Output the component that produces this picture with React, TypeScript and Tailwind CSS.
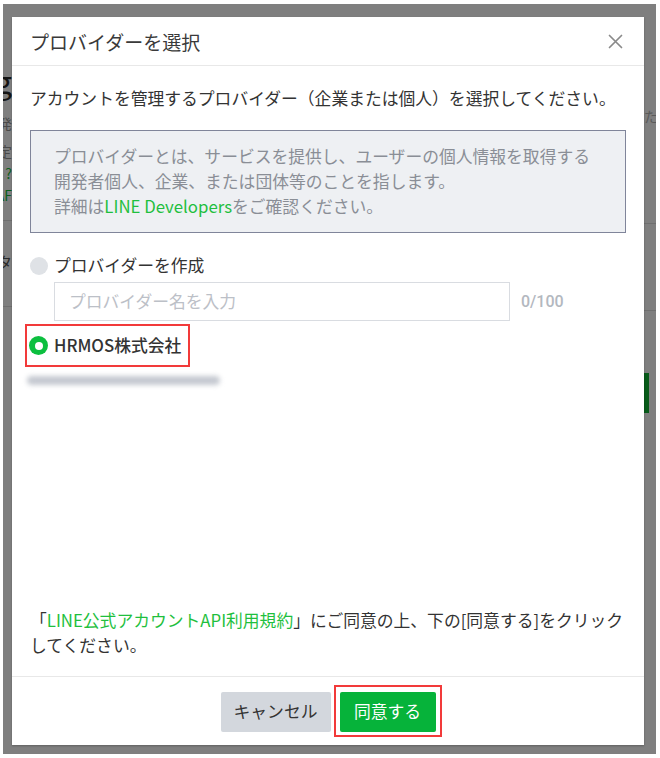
import React from "react";

const font = { fontFamily: '"Noto Sans CJK JP", Roboto, sans-serif' };

function CloseIcon() {
  return (
    <svg width="15" height="15" viewBox="0 0 15 15" fill="none">
      <path d="M1.5 1.5 L13.5 13.5 M13.5 1.5 L1.5 13.5" stroke="#8a8a8a" strokeWidth="1.7" strokeLinecap="round" />
    </svg>
  );
}

export default function App() {
  return (
    <div className="w-[660px] h-[758px] bg-white pt-[4px] pl-[3px] pr-[4px] pb-[4px]" style={font}>
      <div className="relative w-full h-full bg-[#7f7f7f] overflow-hidden flex">
        {/* underlying page (dimmed) */}
        <div className="w-[9px] overflow-hidden flex flex-col items-end shrink-0">
          <div className="h-[58px]" />
          <div className="text-[32px] leading-[36px] text-[#141414] whitespace-nowrap">Setting</div>
          <div className="h-[14px]" />
          <div className="text-[14px] leading-[22px] text-[#4a4a4a] whitespace-nowrap">開発</div>
          <div className="h-[6px]" />
          <div className="text-[14px] leading-[22px] text-[#4a4a4a] whitespace-nowrap">設定</div>
          <div className="text-[14px] leading-[22px] text-[#0b5e1c] whitespace-nowrap">?</div>
          <div className="text-[14px] leading-[22px] text-[#0b5e1c] whitespace-nowrap">AF</div>
          <div className="h-[14px]" />
          <div className="w-full h-px bg-[#6f6f6f]" />
          <div className="h-[30px]" />
          <div className="text-[15px] leading-[22px] text-[#2a2a2a] whitespace-nowrap">タ</div>
          <div className="h-[33px]" />
          <div className="w-full h-px bg-[#6f6f6f]" />
        </div>
        <div className="flex-1" />
        <div className="w-[12px] overflow-hidden flex flex-col shrink-0">
          <div className="h-[101px]" />
          <div className="text-[14px] leading-[22px] text-[#5a5a5a] whitespace-nowrap">たる</div>
          <div className="h-[96px]" />
          <div className="w-full h-px bg-[#6f6f6f]" />
          <div className="h-[86px]" />
          <div className="w-full h-px bg-[#6f6f6f]" />
          <div className="h-[62px]" />
          <div className="w-[5px] h-[40px] bg-[#075a19]" />
        </div>

        {/* modal */}
        <div className="absolute left-[9px] top-[13px] w-[632px] h-[728px] bg-white flex flex-col shadow-[0_1px_2px_rgba(0,0,0,0.25)]">
          <div className="h-[49px] shrink-0 flex items-center justify-between pl-[18px] pr-[21px] border-b border-[#e8e8e8]">
            <div className="text-[19px] leading-[25px] text-[#3a3a3a]">プロバイダーを選択</div>
            <CloseIcon />
          </div>

          <div className="flex-1 flex flex-col px-[18px] pt-[20px]">
            <div className="text-[16.8px] leading-[25px] text-[#333]">
              アカウントを管理するプロバイダー（企業または個人）を選択してください。
            </div>

            <div className="mt-[19px] h-[103px] border border-[#80859a] bg-[#eef0f3] pl-[23px] pt-[13px] text-[16.8px] leading-[25px] text-[#8a8e96]">
              <div>プロバイダーとは、サービスを提供し、ユーザーの個人情報を取得する</div>
              <div>開発者個人、企業、または団体等のことを指します。</div>
              <div>
                詳細は<span className="text-[#1fbf3e]">LINE Developers</span>をご確認ください。
              </div>
            </div>

            <div className="mt-[20px] h-[25px] flex items-center">
              <span className="w-[18px] h-[18px] rounded-full bg-[#dfe2e6]" />
              <span className="ml-[6px] text-[16.8px] leading-[25px] text-[#333]">プロバイダーを作成</span>
            </div>

            <div className="mt-[4px] flex items-center ml-[24px]">
              <div className="w-[456px] h-[39px] border border-[#d9dce1] flex items-center pl-[14px] text-[16.8px] text-[#bcc0c7]">
                プロバイダー名を入力
              </div>
              <span className="ml-[11px] text-[16px] font-medium text-[#b3b8bf]" style={{ fontFamily: "Roboto, sans-serif" }}>
                0/100
              </span>
            </div>

            <div className="mt-[3px] -ml-[5px] w-[165px] h-[43px] border-2 border-[#f23a3a] flex items-center pl-[2px]">
              <span className="w-[19px] h-[19px] rounded-full bg-[#0cbf3f] flex items-center justify-center">
                <span className="w-[8px] h-[8px] rounded-full bg-white" />
              </span>
              <span className="ml-[6px] text-[16.8px] leading-[25px] font-medium text-[#333]">HRMOS株式会社</span>
            </div>

            <div className="mt-[5px] -ml-[3px] h-[16px] w-[193px] flex items-center">
              <div className="w-full h-[9px] bg-[#c4c8d0] blur-[2.5px] rounded-full" />
            </div>

            <div className="mt-auto pb-[18px] text-[16.8px] leading-[25px] text-[#333]">
              「<span className="text-[#1fbf3e]">LINE公式アカウントAPI利用規約</span>」にご同意の上、下の[同意する]をクリック
              <br />
              してください。
            </div>
          </div>

          <div className="shrink-0 border-t border-[#e8e8e8] flex justify-center gap-[9px] pt-[15px] pb-[13px]">
            <div className="w-[110px] h-[40px] bg-[#d3d7dd] rounded-[2px] flex items-center justify-center text-[16.8px] text-[#333]">
              キャンセル
            </div>
            <div className="relative w-[96px] h-[40px]">
              <div className="w-full h-full bg-[#06b33a] rounded-[2px] flex items-center justify-center text-[16.8px] text-white">
                同意する
              </div>
              <span className="absolute -top-[7px] -bottom-[5px] -left-[6px] -right-[6px] border-2 border-[#f23a3a]" />
            </div>
          </div>
        </div>
      </div>
    </div>
  );
}
